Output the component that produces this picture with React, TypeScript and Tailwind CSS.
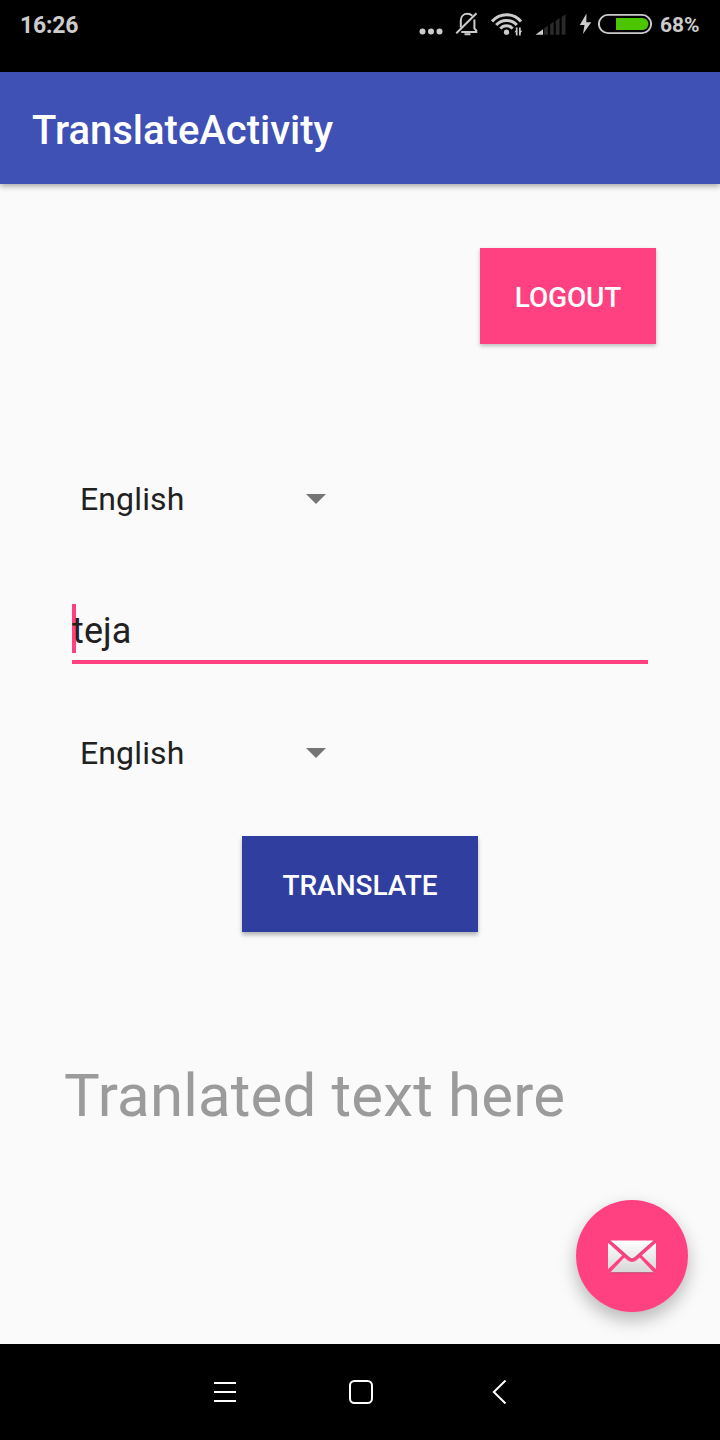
import React from "react";

function StatusBar() {
  return (
    <header className="flex h-[72px] items-start bg-black pl-5 text-[#cccccc]">
      <time className="h-[50px] w-[399px] pt-px text-[23px] leading-[50px] font-bold tracking-[-0.2px]">16:26</time>
      <svg className="h-[50px] w-6" viewBox="419 0 24 50" fill="currentColor">
        <circle cx="422.5" cy="31.5" r="3" />
        <circle cx="431" cy="31.5" r="3" />
        <circle cx="439.5" cy="31.5" r="3" />
      </svg>
      <svg className="ml-3 h-[50px] w-6" viewBox="455 0 24 50" fill="none" stroke="currentColor" strokeWidth="2">
        <path d="M460.8 27.5V20.5C460.8 16.5 463.6 13.8 467.5 13.8C469.3 13.8 471 14.5 472.3 15.8" />
        <path d="M474.4 19.5V28.3L476.3 30.6V32H461.3" />
        <path d="M456.3 33.2L476.5 13.2" />
        <path d="M464.5 34.2H470.5" />
      </svg>
      <svg className="ml-3 h-[50px] w-8" viewBox="491 0 32 50" fill="none" stroke="currentColor" strokeWidth="3">
        <path d="M492 21.4C499.8 12.4 513.2 12.4 521 21.4" />
        <path d="M496.2 25.1C501.6 18.8 511.4 18.8 516.8 25.1" />
        <path d="M500.4 28.6C503.5 24.8 509.5 24.8 512.6 28.6" />
        <circle cx="506.5" cy="32.2" r="2.6" fill="currentColor" stroke="none" />
        <path d="M516.7 27.5V35.5M519.9 27.5V35.5" strokeWidth="1.7" />
        <path d="M517 29.2L514.3 32.3H517ZM519.6 34L522.4 30.8H519.6Z" fill="currentColor" stroke="none" />
      </svg>
      <svg className="ml-3 h-[50px] w-8" viewBox="535 0 32 50">
        <path d="M535.5 34.7L543 29.3V34.7Z" fill="#cccccc" />
        <path d="M544.2 28.2L547.8 25.7V34.7H544.2ZM550.2 24.3L553.7 21.8V34.7H550.2ZM555.8 20.7L559.5 18V34.7H555.8ZM561.7 17L565.5 14.2V34.7H561.7Z" fill="#2a2a2a" />
      </svg>
      <svg className="ml-3 h-[50px] w-4" viewBox="579 0 16 50" fill="currentColor">
        <path d="M586.5 13.5L579.8 25H584.5L583 34L591.3 22.2H586.3Z" />
      </svg>
      <svg className="ml-[3px] h-[50px] w-[54px]" viewBox="598 0 54 50" fill="none">
        <rect x="598.9" y="14.9" width="52.2" height="18.2" rx="9.1" stroke="#cccccc" strokeWidth="1.9" />
        <path d="M616 18H642.5A6 6 0 0 1 642.5 30H616Z" fill="#4bc500" />
      </svg>
      <span className="ml-2 h-[50px] text-[21px] leading-[50px] font-bold">68%</span>
    </header>
  );
}

function Spinner({ value }: { value: string }) {
  return (
    <button className="flex h-12 w-[262px] items-center justify-between pl-4 text-left text-[32px] leading-[48px] tracking-[0.13px] text-[#212121]">
      <span>{value}</span>
      <svg className="h-[10px] w-5" viewBox="0 0 20 10">
        <path d="M0 0H20L10 10Z" fill="#757575" />
      </svg>
    </button>
  );
}

function MailIcon() {
  return (
    <svg className="mt-px h-9 w-[50px]" viewBox="0 0 50 36">
      <defs>
        <linearGradient id="paper" x1="0" y1="1" x2="0" y2="34" gradientUnits="userSpaceOnUse">
          <stop offset="0" stopColor="#ffffff" />
          <stop offset="1" stopColor="#d6d6d6" />
        </linearGradient>
      </defs>
      <g fill="#8b3457" opacity="0.55" transform="translate(0 0.8)">
        <path d="M3.5 1.5H46.5L27.5 18.3Q25 20.5 22.5 18.3Z" />
        <path d="M3.5 33.5L17.5 18.5L20.5 21.1Q25 24.5 29.5 21.1L32.5 18.5L46.5 33.5Z" />
      </g>
      <g fill="url(#paper)">
        <path d="M3.5 1.5H46.5L27.5 18.3Q25 20.5 22.5 18.3Z" />
        <path d="M1 3.8L15.2 16.6L1 30.3Z" />
        <path d="M49 3.8L34.8 16.6L49 30.3Z" />
        <path d="M3.5 33.2L17.3 18.5L20.5 21.2Q25 24.6 29.5 21.2L32.7 18.5L46.5 33.2Z" />
      </g>
    </svg>
  );
}

function NavigationBar() {
  return (
    <nav className="flex h-24 items-center bg-black pl-[213px]">
      <svg className="h-6 w-6" viewBox="0 0 24 24" fill="white">
        <path d="M1 2H23V4H1ZM1 11H23V13H1ZM1 20H23V22H1Z" />
      </svg>
      <svg className="ml-28 h-6 w-6" viewBox="0 0 24 24" fill="none" stroke="white" strokeWidth="2">
        <rect x="1" y="1" width="22" height="22" rx="4.5" />
      </svg>
      <svg className="ml-[119px] h-6 w-4" viewBox="0 0 16 24" fill="none" stroke="white" strokeWidth="2">
        <path d="M13.5 0.5L1.8 12L13.5 23.5" />
      </svg>
    </nav>
  );
}

export default function App() {
  return (
    <div className="flex h-[1440px] w-[720px] flex-col overflow-hidden bg-[#fafafa] font-['Roboto',sans-serif]">
      <StatusBar />
      <div className="z-10 flex h-28 items-center bg-[#3f51b5] px-8 pt-1.5 shadow-[0_2px_6px_rgba(0,0,0,0.36)]">
        <h1 className="text-[40px] leading-[48px] font-medium text-white">TranslateActivity</h1>
      </div>
      <main className="relative flex h-[1160px] flex-col px-16 pt-16">
        <button className="h-24 w-44 self-end bg-[#ff4081] pt-1 text-[28px] font-medium tracking-[-0.15px] text-white shadow-[0_2px_4px_rgba(0,0,0,0.25)]">
          LOGOUT
        </button>
        <div className="mt-[131px]">
          <Spinner value="English" />
        </div>
        <div className="relative mx-2 mt-[81px] h-[60px] border-b-4 border-[#ff4081]">
          <span className="absolute top-0 left-0 h-[49px] w-1 bg-[#ff4081]" />
          <p className="relative pt-1.5 text-[36px] leading-[42px] tracking-[0.1px] text-[#212121]">teja</p>
        </div>
        <div className="mt-[65px]">
          <Spinner value="English" />
        </div>
        <button className="mt-[59px] h-24 w-[236px] self-center bg-[#303f9f] pt-1 text-[28px] font-medium text-white shadow-[0_3px_4px_rgba(0,0,0,0.28)]">
          TRANSLATE
        </button>
        <p className="mt-[129px] text-[60px] leading-[70px] tracking-[0.16px] text-[#9b9b9b]">Tranlated text here</p>
        <button aria-label="Send mail" className="absolute right-8 bottom-8 flex h-28 w-28 items-center justify-center rounded-full bg-[#ff4081] shadow-[0_8px_18px_rgba(0,0,0,0.27)]">
          <MailIcon />
        </button>
      </main>
      <NavigationBar />
    </div>
  );
}
